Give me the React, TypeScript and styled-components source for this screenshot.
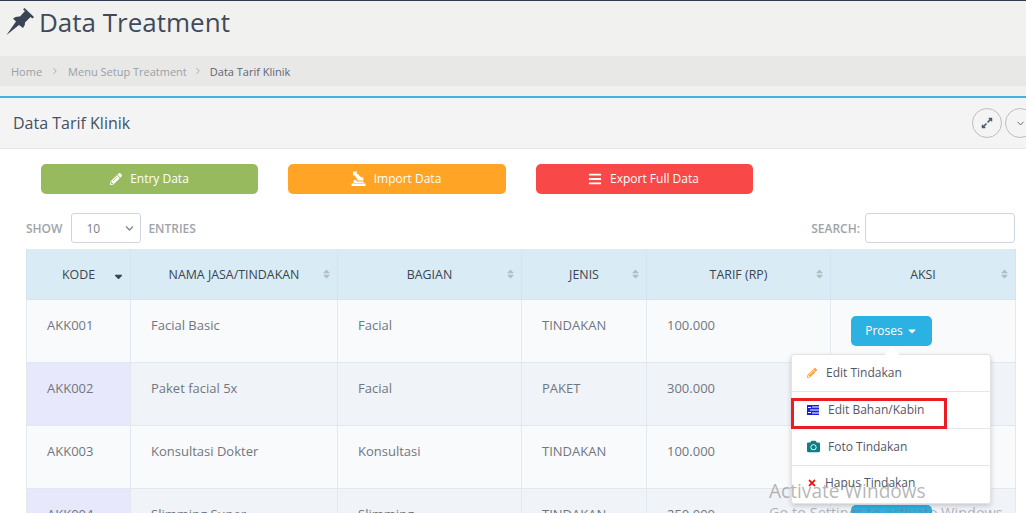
import React from 'react';
import styled, { createGlobalStyle } from 'styled-components';
import { FaCamera, FaPencilAlt, FaTimes, FaBars, FaExpandAlt, FaChevronDown, FaCaretDown, FaSort, FaSortDown } from 'react-icons/fa';
import { FiChevronDown, FiChevronRight } from 'react-icons/fi';

const GlobalStyle = createGlobalStyle`
  html, body {
    margin: 0;
    padding: 0;
    width: 1026px;
    height: 513px;
    overflow: hidden;
    background: #fff;
  }
  * {
    box-sizing: border-box;
  }
`;

const Page = styled.div`
  position: relative;
  width: 1026px;
  height: 513px;
  overflow: hidden;
  font-family: 'Open Sans', sans-serif;
  font-size: 12px;
  color: #676a6c;
  background: #f1f1ef;
  border-top: 1px solid #2f3c4e;
`;

const PageHeader = styled.header`
  display: flex;
  align-items: center;
  gap: 4px;
  height: 40px;
  padding: 2px 0 0 5px;
`;

const PageTitle = styled.h1`
  margin: 0;
  font-size: 26px;
  font-weight: 400;
  line-height: 40px;
  color: #3f4a5a;
`;

const Breadcrumb = styled.nav`
  display: flex;
  align-items: center;
  height: 30px;
  margin-top: 15px;
  padding-left: 11px;
  background: #e8e8e7;
  font-size: 11px;
  color: #9aa0a8;
`;

const Crumb = styled.span<{ $active?: boolean }>`
  color: ${(p) => (p.$active ? '#5d6675' : '#9aa0a8')};
`;

const CrumbSep = styled.span<{ $width: number }>`
  display: flex;
  justify-content: center;
  width: ${(p) => p.$width}px;
`;

const Panel = styled.section`
  margin-top: 10px;
  border-top: 2px solid #3db5e3;
  background: #fff;
  height: 420px;
`;

const PanelHeading = styled.div`
  display: flex;
  align-items: center;
  justify-content: space-between;
  height: 51px;
  padding-left: 13px;
  background: #f4f4f4;
  border-bottom: 1px solid #e6e6e6;
`;

const PanelTitle = styled.h2`
  margin: 0;
  font-size: 16px;
  font-weight: 400;
  color: #46505f;
`;

const RoundTools = styled.div`
  display: flex;
  gap: 3px;
  margin-right: -9px;
`;

const RoundButton = styled.button`
  display: flex;
  align-items: center;
  justify-content: center;
  width: 30px;
  height: 30px;
  padding: 0;
  border: 1px solid #bdbdbd;
  border-radius: 50%;
  background: transparent;
  color: #4d5a6c;
`;

const PanelBody = styled.div`
  padding: 15px 11px 0 26px;
`;

const ActionBar = styled.div`
  display: flex;
  gap: 30px;
  padding-left: 15px;
  margin-bottom: 19px;
`;

const ActionButton = styled.button<{ $color: string; $width: number; $nudge?: number }>`
  display: flex;
  align-items: center;
  justify-content: center;
  gap: 8px;
  width: ${(p) => p.$width}px;
  height: 30px;
  padding: 0 ${(p) => p.$nudge ?? 0}px 1px 0;
  border: 0;
  border-radius: 5px;
  background: ${(p) => p.$color};
  color: #fff;
  font-family: inherit;
  font-size: 12px;
`;

const TableControls = styled.div`
  display: flex;
  align-items: center;
  justify-content: space-between;
  height: 30px;
  margin-bottom: 6px;
  font-size: 12px;
  font-weight: 600;
  color: #a0a4a9;
`;

const ControlGroup = styled.label`
  display: flex;
  align-items: center;
  gap: 8px;
`;

const FakeSelect = styled.div`
  display: flex;
  align-items: center;
  justify-content: space-between;
  width: 70px;
  height: 30px;
  margin: 0 0 0 1px;
  padding: 0 3px 0 14px;
  border: 1px solid #cdd6e0;
  border-radius: 3px;
  background: #fff;
  font-weight: 400;
  color: #7b8088;
`;

const SelectLabel = styled.span`
  margin-right: auto;
`;

const SelectArrow = styled(FaChevronDown)`
  width: 9px;
  height: 9px;
  margin-right: 3px;
  color: #85898f;
`;

const EntriesLabel = styled.span`
  margin-left: -1px;
`;

const SearchInput = styled.input`
  width: 150px;
  height: 30px;
  margin-left: -3px;
  border: 1px solid #cdd6e0;
  border-radius: 3px;
  background: #fff;
`;

const Table = styled.table`
  width: 989px;
  border-collapse: collapse;
  table-layout: fixed;
`;

const HeadCell = styled.th`
  position: relative;
  height: 50px;
  padding: 2px 0 0;
  background: #d9ebf5;
  border: 1px solid #d3e5f0;
  border-top: 0;
  font-size: 12.4px;
  font-weight: 500;
  color: #3c4452;
  text-align: center;
`;

const SortMark = styled.span<{ $on?: boolean }>`
  position: absolute;
  top: 50%;
  right: 5px;
  display: flex;
  transform: translateY(-50%);
  color: ${(p) => (p.$on ? '#3c4452' : '#b4bcc4')};
`;

const Row = styled.tr<{ $odd: boolean }>`
  background: ${(p) => (p.$odd ? '#f9fafc' : '#f0f3f8')};
`;

const Cell = styled.td<{ $tint?: boolean }>`
  height: 63px;
  padding: 0 20px 12px 20px;
  border: 1px solid #e2e8f0;
  font-size: 13px;
  color: #707780;
  background: ${(p) => (p.$tint ? '#e8e8fd' : 'transparent')};
`;

const ActionCell = styled.td`
  position: relative;
  padding: 0 0 0 20px;
  border: 1px solid #e2e8f0;
`;

const ProsesButton = styled.button`
  display: flex;
  align-items: center;
  justify-content: center;
  gap: 3px;
  width: 81px;
  height: 30px;
  padding: 0;
  border: 0;
  border-radius: 5px;
  background: #2cb1e3;
  color: #fff;
  font-family: inherit;
  font-size: 12px;
`;

const Dropdown = styled.ul`
  position: absolute;
  top: 54px;
  left: -40px;
  z-index: 2;
  width: 200px;
  margin: 0;
  padding: 0;
  list-style: none;
  background: #fff;
  border: 1px solid #e4e4e4;
  border-radius: 3px;
  box-shadow: 0 2px 5px rgba(0, 0, 0, 0.18);

  &::before {
    content: '';
    position: absolute;
    top: -6px;
    left: 95px;
    width: 10px;
    height: 10px;
    background: #fff;
    transform: rotate(45deg);
  }
`;

const DropdownItem = styled.li<{ $lift?: number }>`
  position: relative;
  display: flex;
  align-items: center;
  height: 37px;
  padding: 0 0 ${(p) => p.$lift ?? 0}px 15px;
  font-size: 12px;
  color: #4f5866;
  border-bottom: 1px solid #e6e6e6;

  &:last-child {
    border-bottom: 0;
  }
`;

const ItemLabel = styled.span<{ $gap: number }>`
  margin-left: ${(p) => p.$gap}px;
`;

const Highlight = styled.div`
  position: absolute;
  top: 397px;
  left: 791px;
  z-index: 3;
  width: 156px;
  height: 31px;
  border: 3px solid #ec1c24;
`;

const Watermark = styled.div`
  position: absolute;
  top: 479px;
  left: 769px;
  z-index: 4;
  color: rgba(120, 120, 120, 0.55);
  font-family: 'Open Sans', sans-serif;
  font-size: 19.1px;
  line-height: 23px;
  white-space: nowrap;
  pointer-events: none;
`;

const WatermarkSmall = styled.div`
  font-size: 14.5px;
  line-height: 19px;
`;

const PinIcon = () => (
  <svg width="30" height="30" viewBox="0 0 30 30" fill="#3a4454">
    <path d="M1.5 28 L11 14.5 L8 11.5 Q11 9 15 9.5 L20 4 L18 2.5 L19.5 1 L29 10 L27.5 11.5 L25.5 10 L20 15.5 Q20.5 18.5 18 21 L14 18 Z" />
  </svg>
);

const ImportIcon = () => (
  <svg width="15" height="15" viewBox="0 0 15 15" fill="#fff">
    <path d="M2 0.5 H6.5 L5.3 1.8 L11 7 L12 5.5 L12.5 9.5 H7 L3.3 4 L2 5 Z" />
    <path d="M2.5 9 H5 L6 10.5 H12.5 V12 H2.5 Z" />
    <rect x="0.5" y="12.5" width="14" height="2.5" />
  </svg>
);

const StripesIcon = () => (
  <svg width="12" height="10" viewBox="0 0 12 10">
    <rect width="12" height="10" fill="#1e1ee0" />
    <path d="M5 2H12M3 5H12M5 8H12" stroke="#fff" strokeWidth="1" />
    <path d="M1 2.5H4M1 7.5H4" stroke="#fff" strokeWidth="1" />
  </svg>
);

const columns = [
  { label: 'KODE', width: 104 },
  { label: 'NAMA JASA/TINDAKAN', width: 207 },
  { label: 'BAGIAN', width: 184 },
  { label: 'JENIS', width: 125 },
  { label: 'TARIF (RP)', width: 184 },
  { label: 'AKSI', width: 185 },
];

const rows = [
  { kode: 'AKK001', nama: 'Facial Basic', bagian: 'Facial', jenis: 'TINDAKAN', tarif: '100.000' },
  { kode: 'AKK002', nama: 'Paket facial 5x', bagian: 'Facial', jenis: 'PAKET', tarif: '300.000' },
  { kode: 'AKK003', nama: 'Konsultasi Dokter', bagian: 'Konsultasi', jenis: 'TINDAKAN', tarif: '100.000' },
  { kode: 'AKK004', nama: 'Slimming Super', bagian: 'Slimming', jenis: 'TINDAKAN', tarif: '250.000' },
];

export default function App() {
  return (
    <Page>
      <GlobalStyle />
      <PageHeader>
        <PinIcon />
        <PageTitle>Data Treatment</PageTitle>
      </PageHeader>
      <Breadcrumb>
        <Crumb>Home</Crumb>
        <CrumbSep $width={26}><FiChevronRight size={10} /></CrumbSep>
        <Crumb>Menu Setup Treatment</Crumb>
        <CrumbSep $width={23}><FiChevronRight size={10} /></CrumbSep>
        <Crumb $active>Data Tarif Klinik</Crumb>
      </Breadcrumb>
      <Panel>
        <PanelHeading>
          <PanelTitle>Data Tarif Klinik</PanelTitle>
          <RoundTools>
            <RoundButton><FaExpandAlt size={12} /></RoundButton>
            <RoundButton><FiChevronDown size={11} /></RoundButton>
          </RoundTools>
        </PanelHeading>
        <PanelBody>
          <ActionBar>
            <ActionButton $color="#98ba5e" $width={217}><FaPencilAlt size={12} />Entry Data</ActionButton>
            <ActionButton $color="#ffa425" $width={218} $nudge={2}><ImportIcon />Import Data</ActionButton>
            <ActionButton $color="#f94848" $width={217} $nudge={2}><FaBars size={14} />Export Full Data</ActionButton>
          </ActionBar>
          <TableControls>
            <ControlGroup>
              SHOW
              <FakeSelect><SelectLabel>10</SelectLabel><SelectArrow /></FakeSelect>
              <EntriesLabel>ENTRIES</EntriesLabel>
            </ControlGroup>
            <ControlGroup>
              SEARCH:
              <SearchInput />
            </ControlGroup>
          </TableControls>
          <Table>
            <colgroup>
              {columns.map((c) => <col key={c.label} width={c.width} />)}
            </colgroup>
            <thead>
              <tr>
                {columns.map((c, i) => (
                  <HeadCell key={c.label}>
                    {c.label}
                    <SortMark $on={i === 0}>
                      {i === 0 ? <FaSortDown size={13} /> : <FaSort size={11} />}
                    </SortMark>
                  </HeadCell>
                ))}
              </tr>
            </thead>
            <tbody>
              {rows.map((r, i) => (
                <Row key={r.kode} $odd={i % 2 === 0}>
                  <Cell $tint={i % 2 === 1}>{r.kode}</Cell>
                  <Cell>{r.nama}</Cell>
                  <Cell>{r.bagian}</Cell>
                  <Cell>{r.jenis}</Cell>
                  <Cell>{r.tarif}</Cell>
                  <ActionCell>
                    <ProsesButton>Proses <FaCaretDown size={12} /></ProsesButton>
                    {i === 0 && (
                      <Dropdown>
                        <DropdownItem>
                          <FaPencilAlt size={10} color="#f9a23c" />
                          <ItemLabel $gap={9}>Edit Tindakan</ItemLabel>
                        </DropdownItem>
                        <DropdownItem>
                          <StripesIcon />
                          <ItemLabel $gap={9}>Edit Bahan/Kabin</ItemLabel>
                        </DropdownItem>
                        <DropdownItem $lift={1}>
                          <FaCamera size={13} color="#0f7f86" />
                          <ItemLabel $gap={8}>Foto Tindakan</ItemLabel>
                        </DropdownItem>
                        <DropdownItem $lift={3}>
                          <FaTimes size={10} color="#f01010" />
                          <ItemLabel $gap={8}>Hapus Tindakan</ItemLabel>
                        </DropdownItem>
                      </Dropdown>
                    )}
                  </ActionCell>
                </Row>
              ))}
            </tbody>
          </Table>
        </PanelBody>
      </Panel>
      <Highlight />
      <Watermark>
        Activate Windows
        <WatermarkSmall>Go to Settings to activate Windows.</WatermarkSmall>
      </Watermark>
    </Page>
  );
}
